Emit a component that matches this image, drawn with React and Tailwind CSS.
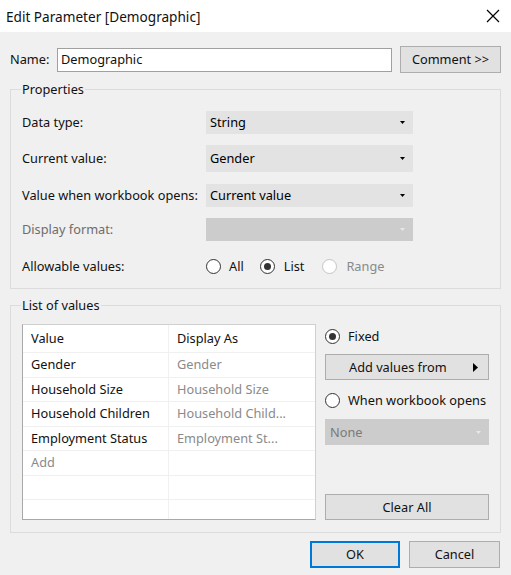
import React from 'react'

const font = { fontFamily: '"Noto Sans", "Open Sans", sans-serif' }

const Arrow = ({ disabled }) => (
  <svg width="5" height="3" viewBox="0 0 5 3" className="shrink-0">
    <path d="M0 0 L5 0 L2.5 3 Z" fill={disabled ? '#e8e8e8' : '#000'} />
  </svg>
)

const Select = ({ value, disabled, tall }) => (
  <div
    className={`w-[207px] flex items-center justify-between pl-[4px] pr-[8px] ${
      tall ? 'h-[27px]' : 'h-[23px]'
    } ${disabled ? 'bg-[#cccccc]' : 'bg-[#e3e3e3]'}`}
  >
    <span className="text-black">{value}</span>
    <Arrow disabled={disabled} />
  </div>
)

const Radio = ({ checked, disabled }) => (
  <span
    className={`w-[15px] h-[15px] shrink-0 rounded-full border flex items-center justify-center bg-white ${
      disabled ? 'border-[#c4c4c4]' : 'border-[#333333]'
    }`}
  >
    {checked && <span className="w-[7px] h-[7px] rounded-full bg-[#333333]" />}
  </span>
)

const rows = [
  ['Gender', 'Gender'],
  ['Household Size', 'Household Size'],
  ['Household Children', 'Household Child...'],
  ['Employment Status', 'Employment St...'],
  ['Add', ''],
  ['', ''],
  ['', ''],
]

export default function App() {
  return (
    <div
      className="w-[511px] h-[575px] bg-[#f0f0f0] flex flex-col text-[12.75px] text-[#111111] leading-[17px] whitespace-nowrap overflow-hidden"
      style={font}
    >
      {/* title bar */}
      <div className="h-[32px] bg-white flex items-center justify-between pl-[6px] pr-[11px] shrink-0">
        <span className="text-[13.6px]">Edit Parameter [Demographic]</span>
        <svg width="14" height="14" viewBox="0 0 14 14">
          <path d="M1 1 L13 13 M13 1 L1 13" stroke="#000" strokeWidth="1.2" />
        </svg>
      </div>

      <div className="px-[10px] flex flex-col">
        {/* name row */}
        <div className="mt-[14px] flex items-center h-[27px]">
          <span className="w-[47px]">Name:</span>
          <div className="w-[335px] h-[24px] bg-white border border-[#a0a0a0] flex items-center pl-[3px]">
            Demographic
          </div>
          <button className="ml-[8px] w-[101px] h-[27px] bg-[#e1e1e1] border border-[#adadad]">
            Comment &gt;&gt;
          </button>
        </div>

        {/* properties */}
        <fieldset className="mt-[8px] border border-[#dcdcdc] px-[11px] pb-[10px]">
          <legend className="px-[1px] -ml-[1px]">Properties</legend>
          <div className="flex flex-col pt-[13px]">
            <div className="flex items-center">
              <span className="w-[184px]">Data type:</span>
              <Select value="String" />
            </div>
            <div className="flex items-center mt-[11px]">
              <span className="w-[184px]">Current value:</span>
              <Select value="Gender" tall />
            </div>
            <div className="flex items-center mt-[12px]">
              <span className="w-[184px]">Value when workbook opens:</span>
              <Select value="Current value" />
            </div>
            <div className="flex items-center mt-[11px]">
              <span className="w-[184px] text-[#6d6d6d]">Display format:</span>
              <Select value="" disabled />
            </div>
            <div className="flex items-center mt-[14px] h-[23px]">
              <span className="w-[184px]">Allowable values:</span>
              <div className="flex items-center gap-[8px]">
                <Radio />
                <span>All</span>
              </div>
              <div className="flex items-center gap-[9px] ml-[16px]">
                <Radio checked />
                <span>List</span>
              </div>
              <div className="flex items-center gap-[9px] ml-[18px] text-[#8a8a8a]">
                <Radio disabled />
                <span>Range</span>
              </div>
            </div>
          </div>
        </fieldset>

        {/* list of values */}
        <fieldset className="mt-[8px] border border-[#dcdcdc] px-[11px] pb-[12px]">
          <legend className="px-[1px] -ml-[1px]">List of values</legend>
          <div className="flex pt-[10px]">
            <div className="w-[294px] h-[196px] bg-white border border-[#a8a8a8] border-t-[#d0d0d0] border-r-[#d0d0d0] overflow-hidden flex flex-col">
              <div className="h-[28px] shrink-0 flex border-b border-[#f0f0f0]">
                <div className="w-[146px] pl-[8px] flex items-center border-r border-[#f0f0f0]">Value</div>
                <div className="flex-1 pl-[8px] flex items-center">Display As</div>
              </div>
              {rows.map((r, i) => (
                <div key={i} className="h-[24.5px] shrink-0 flex border-b border-[#f0f0f0]">
                  <div
                    className={`w-[146px] pl-[8px] flex items-center border-r border-[#f0f0f0] ${
                      r[0] === 'Add' ? 'text-[#8a8a8a]' : ''
                    }`}
                  >
                    {r[0]}
                  </div>
                  <div className="flex-1 pl-[8px] flex items-center text-[#8a8a8a]">{r[1]}</div>
                </div>
              ))}
            </div>

            <div className="ml-[9px] w-[164px] flex flex-col">
              <div className="flex items-center gap-[8px] h-[20px] mt-[2px]">
                <Radio checked />
                <span>Fixed</span>
              </div>
              <button className="mt-[8px] h-[26px] bg-[#e1e1e1] border border-[#adadad] flex items-center justify-between pl-[23px] pr-[10px]">
                <span>Add values from</span>
                <svg width="5" height="9" viewBox="0 0 5 9">
                  <path d="M0 0 L5 4.5 L0 9 Z" fill="#000" />
                </svg>
              </button>
              <div className="flex items-center gap-[8px] h-[20px] mt-[10px]">
                <Radio />
                <span>When workbook opens</span>
              </div>
              <div className="mt-[9px] h-[26px] bg-[#cccccc] flex items-center justify-between pl-[5px] pr-[8px] text-[#7a7a7a]">
                <span>None</span>
                <Arrow disabled />
              </div>
              <button className="mt-auto h-[26px] bg-[#e1e1e1] border border-[#adadad]">Clear All</button>
            </div>
          </div>
        </fieldset>

        {/* footer */}
        <div className="mt-[8px] flex justify-end gap-[9px] pr-[1px]">
          <button className="w-[90px] h-[27px] bg-[#e1e1e1] border-2 border-[#0078d7]">OK</button>
          <button className="w-[91px] h-[27px] bg-[#e1e1e1] border border-[#adadad]">Cancel</button>
        </div>
      </div>
    </div>
  )
}
